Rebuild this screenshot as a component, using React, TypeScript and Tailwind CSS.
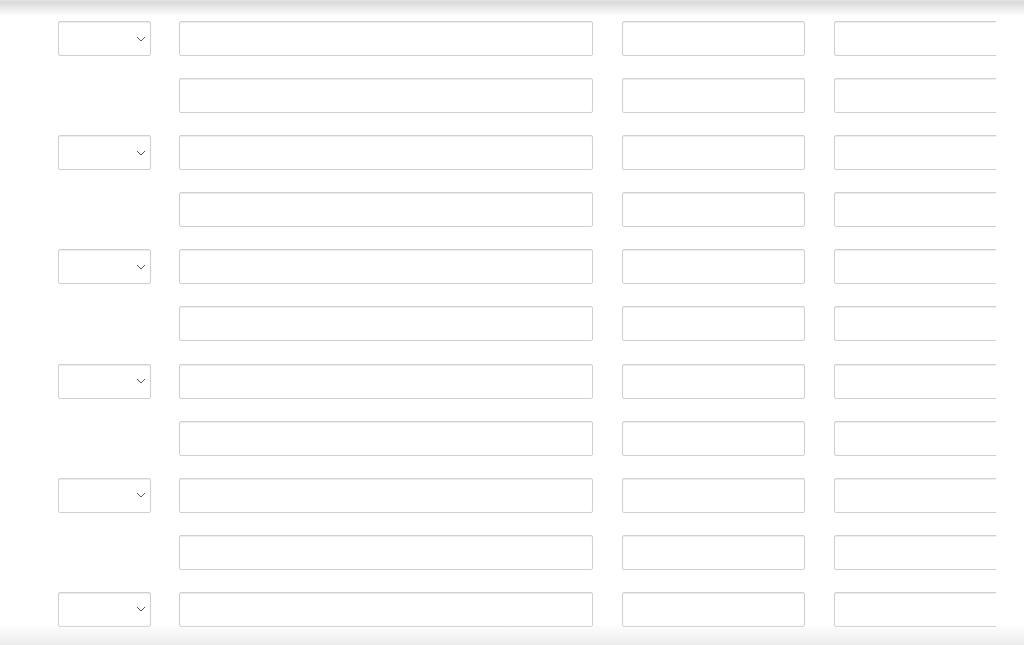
import React from 'react';

const rows = Array.from({ length: 11 }, (_, i) => i);

function Chevron() {
  return (
    <svg width="10" height="6" viewBox="0 0 10 6" className="absolute right-[4px] top-1/2 -translate-y-1/2" fill="none">
      <path d="M1 1l4 4 4-4" stroke="#555" strokeWidth="1" />
    </svg>
  );
}

function Field({ className }: { className: string }) {
  return (
    <input
      type="text"
      className={`h-[35px] shrink-0 rounded-[2px] border border-[#cfcfcf] bg-white shadow-[inset_0_1px_1px_rgba(0,0,0,0.075)] outline-none ${className}`}
    />
  );
}

export default function App() {
  return (
    <div className="relative h-[645px] w-[1024px] overflow-hidden bg-white font-['Liberation_Sans',sans-serif]">
      <div className="w-[996px] overflow-hidden pt-[21px]">
        <div className="flex flex-col gap-[22.1px]">
          {rows.map((i) => (
            <div key={i} className="flex items-center">
              <div className="ml-[58px] w-[93px] shrink-0">
                {i % 2 === 0 ? (
                  <div className="relative h-[35px] rounded-[2px] border border-[#cfcfcf] bg-white shadow-[inset_0_1px_1px_rgba(0,0,0,0.075)]">
                    <Chevron />
                  </div>
                ) : null}
              </div>
              <Field className="ml-[28px] w-[414px]" />
              <Field className="ml-[29px] w-[183px]" />
              <Field className="ml-[29px] w-[200px]" />
            </div>
          ))}
        </div>
      </div>
      {/* top shadow from the bar above */}
      <div className="pointer-events-none absolute inset-x-0 top-0 h-[16px] bg-[linear-gradient(to_bottom,#e4e4e4_0px,#d9d9d9_2px,rgba(255,255,255,0)_16px)]" />
      {/* bottom fade */}
      <div className="pointer-events-none absolute inset-x-0 bottom-0 h-[22px] bg-[linear-gradient(to_bottom,rgba(238,238,238,0),#ececec)]" />
    </div>
  );
}
